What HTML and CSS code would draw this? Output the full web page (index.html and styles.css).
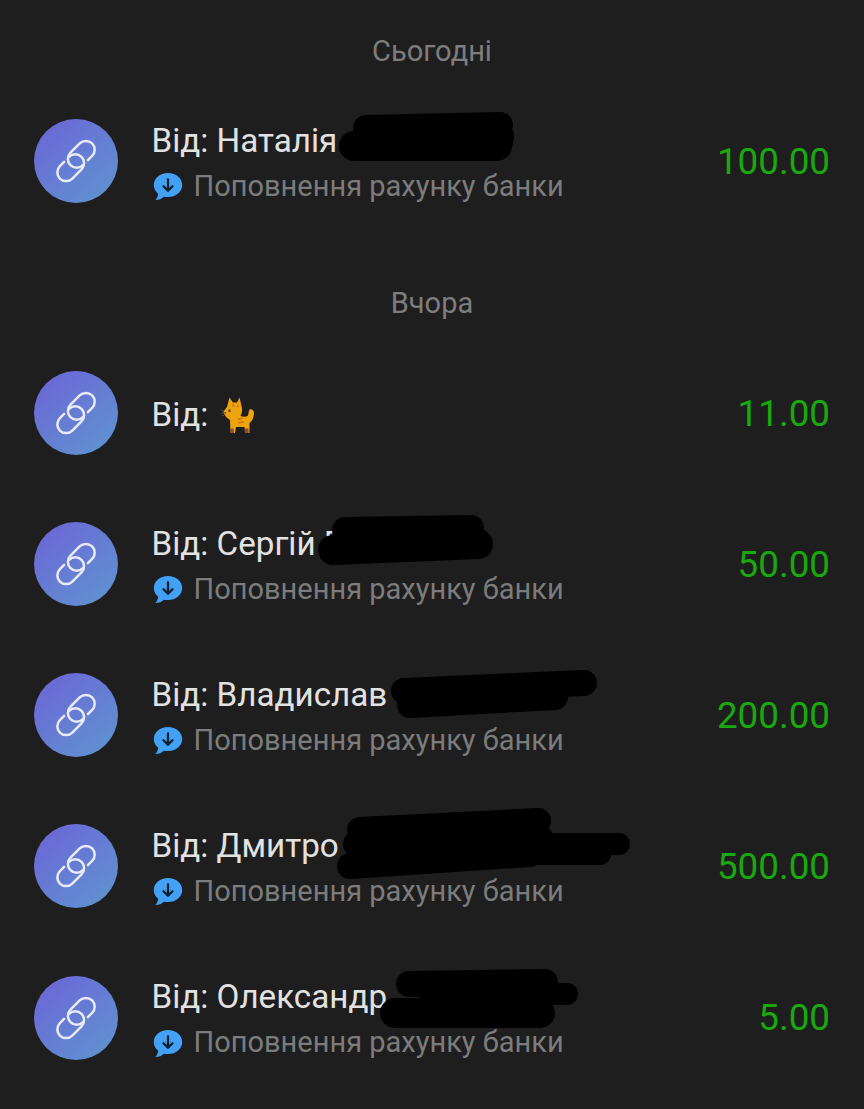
FILE: index.html
```html
<!DOCTYPE html>
<html lang="uk">
<head>
    <meta charset="UTF-8">
    <meta name="viewport" content="width=device-width, initial-scale=1.0">
    <title>Історія поповнень</title>
    <link rel="stylesheet" href="styles.css">
</head>
<body>
    <svg class="sprites" width="0" height="0">
        <defs>
            <linearGradient id="avatarFill" x1="0.15" y1="0.1" x2="0.85" y2="0.9">
                <stop offset="0" stop-color="#6b69d6"/>
                <stop offset="1" stop-color="#6090d0"/>
            </linearGradient>
            <symbol id="avatar" viewBox="-42 -42 84 84">
                <circle r="42" fill="url(#avatarFill)"/>
                <g transform="rotate(-45)" fill="none" stroke="#e8ecfa" stroke-width="2.5" stroke-linecap="round" stroke-linejoin="round">
                    <path d="M9 7.800H15a8.800 8.800 0 0 0 0-17.600H2a8.800 8.800 0 0 0 0 17.600"/>
                    <path d="M-9-7.800H-15a8.800 8.800 0 0 0 0 17.600H-2a8.800 8.800 0 0 0 0-17.600"/>
                </g>
            </symbol>
            <symbol id="bubble" viewBox="0 0 30 29">
                <path fill="#42a0f5" d="M15 1C7 1 .8 6.300 .8 13c0 3.500 1.700 6.600 4.400 8.800C5 24 4 26.300 2.400 28c3.600 0 6.600-1.300 8.500-3.300 1.300.3 2.700.4 4.100.4 8 0 14.200-5.400 14.200-12.100S23 1 15 1z"/>
                <path fill="none" stroke="#12202e" stroke-width="2.300" stroke-linecap="round" stroke-linejoin="round" d="M15 7.500v11M10.500 14.200l4.500 4.500 4.500-4.500"/>
            </symbol>
            <symbol id="cat" viewBox="0 0 34 39">
                <path fill="#eca30c" d="M8.500 1.500 12 6.500h4L18.500 1.500 21 12c.5 4-1 7-1.500 8 2.500 1 5.500 1 7 0 1.500-1.500.5-4.500 2-6.500 2-1 4.500.5 4.500 3.500 0 5-2.500 9-4.500 10v10H24l-.5-6H15l-1 6H9.500L9 24c-2.500-1.500-6-4.500-6.500-8.500L6 11z"/>
                <path fill="#8a4a3a" d="M9.500 37v-4.500h3L13 37zM24 37v-4.500h3.500V37z"/>
                <path fill="#c8701a" d="M17 22.500l4-1 .5 1.500-4.500 1zM17.500 26l5-1 .5 1.500-5.500 1zM12 7.500l2 3-3 0zM17 8l.5 3-2 0z"/>
                <path fill="#5a3a18" d="M7.500 13.500h2v2.500h-2zM3.500 16h1.500v1.500H3.500z"/>
                <path fill="none" stroke="#6b6b5a" stroke-width=".6" d="M3 15 0 14M3 17H0M3 19 .5 20"/>
            </symbol>
        </defs>
    </svg>

    <div class="history">
        <h2 class="day">Сьогодні</h2>

        <div class="row">
            <svg class="avatar"><use href="#avatar"/></svg>
            <div class="info">
                <div class="name">Від: Наталія</div>
                <div class="sub"><svg class="bubble"><use href="#bubble"/></svg>Поповнення рахунку банки</div>
            </div>
            <div class="amount">100.00</div>
            <svg class="scribble">
                <path d="M366 42 500 39"/>
                <path class="wide" d="M354 60 497 60 499 50"/>
            </svg>
        </div>

        <h2 class="day day-next">Вчора</h2>

        <div class="row">
            <svg class="avatar"><use href="#avatar"/></svg>
            <div class="info">
                <div class="name">Від: <svg class="cat"><use href="#cat"/></svg></div>
            </div>
            <div class="amount">11.00</div>
        </div>

        <div class="row">
            <svg class="avatar"><use href="#avatar"/></svg>
            <div class="info">
                <div class="name">Від: Сергій Г</div>
                <div class="sub"><svg class="bubble"><use href="#bubble"/></svg>Поповнення рахунку банки</div>
            </div>
            <div class="amount">50.00</div>
            <svg class="scribble">
                <path d="M345 41 471 39"/>
                <path class="wide" d="M333 61 478 55"/>
            </svg>
        </div>

        <div class="row">
            <svg class="avatar"><use href="#avatar"/></svg>
            <div class="info">
                <div class="name">Від: Владислав</div>
                <div class="sub"><svg class="bubble"><use href="#bubble"/></svg>Поповнення рахунку банки</div>
            </div>
            <div class="amount">200.00</div>
            <svg class="scribble">
                <path d="M404 51 584 43"/>
                <path d="M410 65 555 57"/>
            </svg>
        </div>

        <div class="row">
            <svg class="avatar"><use href="#avatar"/></svg>
            <div class="info">
                <div class="name">Від: Дмитро</div>
                <div class="sub"><svg class="bubble"><use href="#bubble"/></svg>Поповнення рахунку банки</div>
            </div>
            <div class="amount">500.00</div>
            <svg class="scribble">
                <path d="M360 39 538 30"/>
                <path d="M356 53 540 47"/>
                <path d="M350 75 530 63"/>
                <path class="thin" d="M530 53 619 53"/>
                <path class="thin" d="M530 63 600 63"/>
            </svg>
        </div>

        <div class="row">
            <svg class="avatar"><use href="#avatar"/></svg>
            <div class="info">
                <div class="name">Від: Олександр</div>
                <div class="sub"><svg class="bubble"><use href="#bubble"/></svg>Поповнення рахунку банки</div>
            </div>
            <div class="amount">5.00</div>
            <svg class="scribble">
                <path d="M409 42 545 40"/>
                <path class="thin" d="M430 52 567 52"/>
                <path class="wide" d="M395 71 540 71"/>
            </svg>
        </div>
    </div>
</body>
</html>
```

FILE: styles.css
```css
body {
    font-family: Roboto, "Noto Sans", sans-serif;
    background-color: #1e1e1e;
    margin: 0;
    width: 864px;
    height: 1109px;
    overflow: hidden;
}
.sprites {
    display: block;
}
.history {
    padding-top: 16.5px;
}
.day {
    height: 69px;
    line-height: 69px;
    margin: 0;
    font-size: 29px;
    font-weight: 400;
    text-align: center;
    color: #7d7d7d;
}
.day-next {
    margin-top: 32px;
}
.row {
    position: relative;
    display: flex;
    align-items: center;
    height: 151.1px;
    padding: 0 34px;
    box-sizing: border-box;
}
.avatar {
    width: 84px;
    height: 84px;
    flex-shrink: 0;
}
.info {
    flex: 1;
    margin-left: 33.5px;
    padding-top: 4px;
}
.name {
    display: flex;
    align-items: center;
    height: 34px;
    font-size: 33.2px;
    line-height: 34px;
    color: #e2e2e2;
    white-space: pre;
}
.sub {
    display: flex;
    align-items: center;
    height: 34px;
    margin-top: 11px;
    font-size: 29px;
    line-height: 34px;
    color: #7c7c7c;
}
.bubble {
    width: 30px;
    height: 29px;
    margin: 2px 11px 0 1px;
    flex-shrink: 0;
}
.cat {
    width: 34px;
    height: 39px;
    margin-left: 4px;
}
.amount {
    font-size: 36.8px;
    color: #1aa80f;
}
.scribble {
    position: absolute;
    left: 0;
    top: 0;
    width: 864px;
    height: 151px;
    overflow: visible;
    pointer-events: none;
}
.scribble path {
    fill: none;
    stroke: #000000;
    stroke-width: 26px;
    stroke-linecap: round;
    stroke-linejoin: round;
}
.scribble .wide {
    stroke-width: 30px;
}
.scribble .thin {
    stroke-width: 22px;
}
```
